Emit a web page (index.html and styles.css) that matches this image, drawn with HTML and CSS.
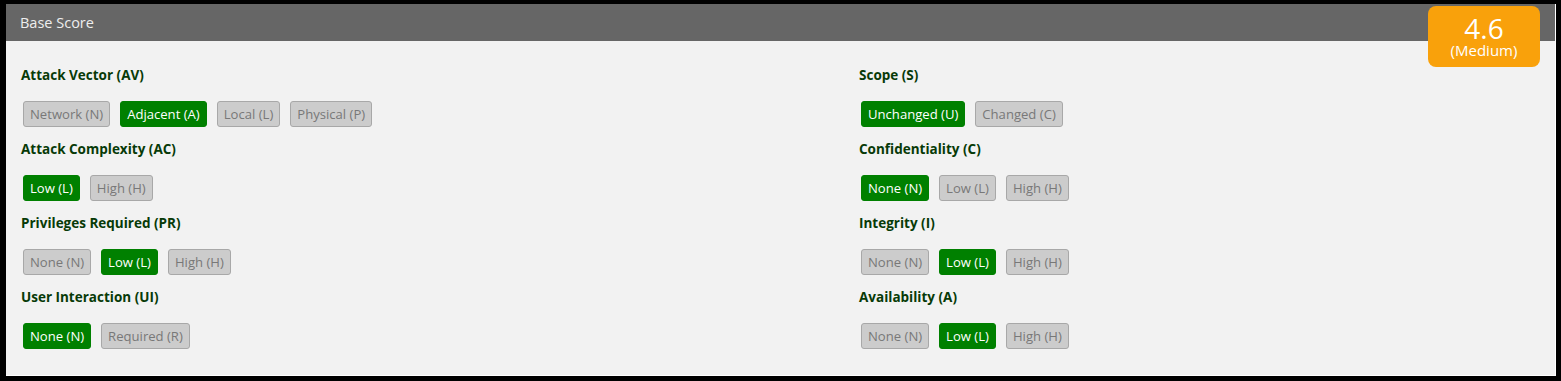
FILE: index.html
```html
<!DOCTYPE html>
<html>
    <head>
        <title>CVSS Calculator</title>
        <meta name="viewport" content="width=device-width, initial-scale=1">
        <link rel="stylesheet" href="styles.css">
    </head>
    <body>
        <div class="panel">
            <div class="panel-head">Base Score</div>
            <div class="score">
                <div class="score-num">4.6</div>
                <div class="score-sev">(Medium)</div>
            </div>
            <div class="metrics">
                <div class="col">
                    <div class="metric">
                        <h3>Attack Vector (AV)</h3>
                        <div class="opts">
                            <span class="opt">Network (N)</span>
                            <span class="opt on">Adjacent (A)</span>
                            <span class="opt">Local (L)</span>
                            <span class="opt">Physical (P)</span>
                        </div>
                    </div>
                    <div class="metric">
                        <h3>Attack Complexity (AC)</h3>
                        <div class="opts">
                            <span class="opt on">Low (L)</span>
                            <span class="opt">High (H)</span>
                        </div>
                    </div>
                    <div class="metric">
                        <h3>Privileges Required (PR)</h3>
                        <div class="opts">
                            <span class="opt">None (N)</span>
                            <span class="opt on">Low (L)</span>
                            <span class="opt">High (H)</span>
                        </div>
                    </div>
                    <div class="metric">
                        <h3>User Interaction (UI)</h3>
                        <div class="opts">
                            <span class="opt on">None (N)</span>
                            <span class="opt">Required (R)</span>
                        </div>
                    </div>
                </div>
                <div class="col">
                    <div class="metric">
                        <h3>Scope (S)</h3>
                        <div class="opts">
                            <span class="opt on">Unchanged (U)</span>
                            <span class="opt">Changed (C)</span>
                        </div>
                    </div>
                    <div class="metric">
                        <h3>Confidentiality (C)</h3>
                        <div class="opts">
                            <span class="opt on">None (N)</span>
                            <span class="opt">Low (L)</span>
                            <span class="opt">High (H)</span>
                        </div>
                    </div>
                    <div class="metric">
                        <h3>Integrity (I)</h3>
                        <div class="opts">
                            <span class="opt">None (N)</span>
                            <span class="opt on">Low (L)</span>
                            <span class="opt">High (H)</span>
                        </div>
                    </div>
                    <div class="metric">
                        <h3>Availability (A)</h3>
                        <div class="opts">
                            <span class="opt">None (N)</span>
                            <span class="opt on">Low (L)</span>
                            <span class="opt">High (H)</span>
                        </div>
                    </div>
                </div>
            </div>
        </div>
    </body>
</html>
```

FILE: styles.css
```css
html, body {
    margin: 0;
    height: 100%;
    background-color: black;
}

body {
    padding: 4px 5px 5px 6px;
    box-sizing: border-box;
    font-family: "Open Sans", "Liberation Sans", sans-serif;
}

.panel {
    position: relative;
    background-color: #f2f2f2;
    border-right: 1px solid #fff;
    border-bottom: 1px solid #fff;
    height: 100%;
    box-sizing: border-box;
}

.panel-head {
    background-color: #666;
    color: #eee;
    font-size: 14.5px;
    height: 37px;
    line-height: 37px;
    padding-left: 14px;
}

.score {
    position: absolute;
    top: 2px;
    right: 15px;
    width: 112px;
    height: 61px;
    background-color: #f9a10b;
    border-radius: 8px;
    color: #fff;
    text-align: center;
}

.score-num {
    font-size: 28px;
    line-height: 28px;
    padding-top: 8px;
}

.score-sev {
    font-size: 15px;
    line-height: 17px;
}

.metrics {
    display: grid;
    grid-template-columns: 838px 1fr;
    padding: 25px 15px 0 15px;
}

.metric {
    height: 74px;
}

.metric h3 {
    margin: 0 0 17px 0;
    font-size: 13.5px;
    line-height: 18px;
    font-weight: bold;
    color: #073a07;
}

.opts {
    display: flex;
    gap: 10px;
    padding-left: 2px;
}

.opt {
    height: 26px;
    box-sizing: border-box;
    line-height: 25px;
    padding: 0 6px;
    font-size: 13.1px;
    color: #787878;
    background-color: #ccc;
    border: 1px solid #a8a8a8;
    border-radius: 3px;
}

.opt.on {
    background-color: #008000;
    border-color: #008000;
    color: #fff;
}
```
